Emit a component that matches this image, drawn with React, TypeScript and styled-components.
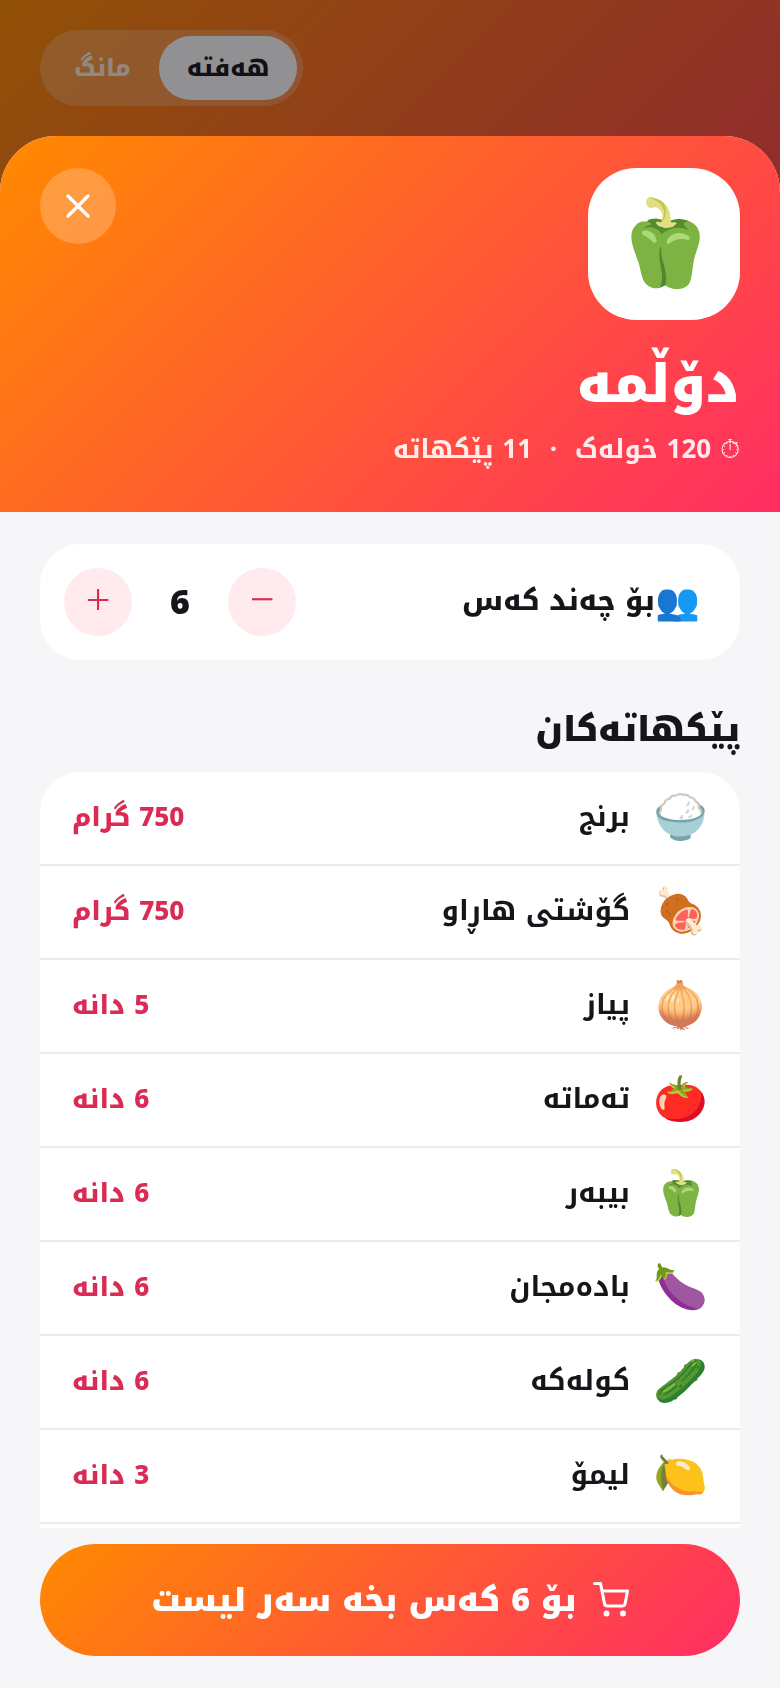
import React, { useState } from "react"
import styled, { createGlobalStyle } from "styled-components"

const ingredients = [
  { id: 1, icon: "🍚", name: "برنج", amount: "750 گرام" },
  { id: 2, icon: "🍖", name: "گۆشتی هاڕاو", amount: "750 گرام" },
  { id: 3, icon: "🧅", name: "پیاز", amount: "5 دانە" },
  { id: 4, icon: "🍅", name: "تەماتە", amount: "6 دانە" },
  { id: 5, icon: "🫑", name: "بیبەر", amount: "6 دانە" },
  { id: 6, icon: "🍆", name: "بادەمجان", amount: "6 دانە" },
  { id: 7, icon: "🥒", name: "کولەکە", amount: "6 دانە" },
  { id: 8, icon: "🍋", name: "لیمۆ", amount: "3 دانە" },
]

const App = () => {
  const [people, setPeople] = useState(6)
  return (
    <Page dir="rtl" lang="ckb">
      <GlobalStyle />
      <PageHeader>
        <Toggle>
          <ToggleButton $active>هەفتە</ToggleButton>
          <ToggleButton>مانگ</ToggleButton>
        </Toggle>
      </PageHeader>
      <Overlay>
        <Sheet role="dialog" aria-label="دۆڵمە">
          <Hero>
            <HeroTop>
              <DishTile>🫑</DishTile>
              <CloseButton aria-label="داخستن">
                <svg width="40" height="40" viewBox="0 0 24 24">
                  <path d="M6 6L18 18M18 6L6 18" />
                </svg>
              </CloseButton>
            </HeroTop>
            <h1>دۆڵمە</h1>
            <p>
              <Clock>⏱</Clock> 120 خولەک &nbsp;·&nbsp; 11 پێکهاتە
            </p>
          </Hero>
          <Body>
            <PeopleCard>
              <PeopleLabel>
                <PeopleIcon>👥</PeopleIcon>
                <PeopleText id="people-label">بۆ چەند کەس</PeopleText>
              </PeopleLabel>
              <Stepper role="group" aria-labelledby="people-label">
                <StepButton
                  aria-label="کەمتر"
                  onClick={() => setPeople(Math.max(1, people - 1))}
                >
                  −
                </StepButton>
                <output>{people}</output>
                <StepButton
                  aria-label="زیاتر"
                  onClick={() => setPeople(people + 1)}
                >
                  +
                </StepButton>
              </Stepper>
            </PeopleCard>
            <h2>پێکهاتەکان</h2>
            <List>
              {ingredients.map(({ id, icon, name, amount }) => (
                <Row key={id}>
                  <RowIcon>{icon}</RowIcon>
                  <RowName>{name}</RowName>
                  <RowAmount>{amount}</RowAmount>
                </Row>
              ))}
            </List>
          </Body>
          <Footer>
            <AddButton>
              <svg width="36" height="36" viewBox="0 0 24 24">
                <circle cx="9" cy="21" r="1" />
                <circle cx="20" cy="21" r="1" />
                <path d="M1 1h4l2.68 13.39a2 2 0 0 0 2 1.61h9.72a2 2 0 0 0 2-1.61L23 6H6" />
              </svg>
              <span>بۆ {people} کەس بخە سەر لیست</span>
            </AddButton>
          </Footer>
        </Sheet>
      </Overlay>
    </Page>
  )
}

const GlobalStyle = createGlobalStyle`
  * {
    box-sizing: border-box;
    margin: 0;
  }
  body {
    background: #f6f6f9;
    overflow: hidden;
  }
  body, button {
    font-family: "Noto Kufi Arabic", "Noto Sans", sans-serif;
  }
  button {
    border: 0;
    padding: 0;
    cursor: pointer;
  }
`
const Page = styled.div`
  min-height: 100vh;
  color: #15151a;
`
const PageHeader = styled.header`
  display: flex;
  justify-content: flex-end;
  align-items: flex-start;
  height: 592px;
  padding: 30px 40px;
  background: linear-gradient(135deg, #ff8a00, #ff2d63);
`
const Toggle = styled.div`
  display: flex;
  padding: 6px;
  border-radius: 38px;
  background: rgba(255, 255, 255, 0.22);
`
const ToggleButton = styled.button<{ $active?: boolean }>`
  height: 64px;
  padding: 0 28px;
  border-radius: 32px;
  font-size: 24px;
  font-weight: 800;
  color: ${({ $active }) => ($active ? "#15151a" : "rgba(255, 255, 255, 0.85)")};
  background: ${({ $active }) => ($active ? "#fff" : "transparent")};
`
const Overlay = styled.div`
  position: fixed;
  inset: 0;
  display: flex;
  padding-top: 136px;
  background: rgba(10, 10, 15, 0.45);
`
const Sheet = styled.section`
  flex: 1;
  display: flex;
  flex-direction: column;
  overflow: hidden;
  border-radius: 56px 56px 0 0;
  background: #f6f6f9;
`
const Hero = styled.header`
  padding: 32px 40px 38px;
  color: #fff;
  background: linear-gradient(135deg, #ff8a00, #ff2d63);
  h1 {
    margin-top: 24px;
    line-height: 82px;
    font-size: 52px;
    font-weight: 900;
  }
  p {
    line-height: 48px;
    font-size: 26px;
    font-weight: 700;
    opacity: 0.9;
  }
`
const HeroTop = styled.div`
  display: flex;
  justify-content: space-between;
  align-items: flex-start;
`
const DishTile = styled.div`
  display: grid;
  place-items: center;
  width: 152px;
  height: 152px;
  border-radius: 48px;
  font-size: 84px;
  line-height: 96px;
  background: #fff;
`
const Clock = styled.span`
  font-weight: 400;
`
const CloseButton = styled.button`
  display: grid;
  place-items: center;
  width: 76px;
  height: 76px;
  border-radius: 50%;
  background: rgba(255, 255, 255, 0.22);
  svg {
    fill: none;
    stroke: #fff;
    stroke-width: 2;
    stroke-linecap: round;
  }
`
const Body = styled.div`
  flex: 1;
  min-height: 0;
  overflow: hidden;
  padding: 32px 40px 0;
  h2 {
    margin: 42px 0 14px;
    line-height: 56px;
    font-size: 34px;
    font-weight: 900;
  }
`
const PeopleCard = styled.div`
  display: flex;
  align-items: center;
  justify-content: space-between;
  padding: 24px 40px 24px 24px;
  border-radius: 40px;
  background: #fff;
`
const PeopleLabel = styled.div`
  display: flex;
  align-items: center;
`
const PeopleIcon = styled.span`
  font-size: 36px;
  font-weight: 800;
`
const PeopleText = styled.span`
  padding-bottom: 4px;
  font-size: 28px;
  font-weight: 800;
`
const Stepper = styled.div`
  display: flex;
  align-items: center;
  output {
    width: 96px;
    text-align: center;
    font-size: 34px;
    font-weight: 900;
  }
`
const StepButton = styled.button`
  width: 68px;
  height: 68px;
  padding-bottom: 8px;
  border-radius: 50%;
  font-family: "Noto Sans", sans-serif;
  font-size: 44px;
  font-weight: 300;
  line-height: 60px;
  color: #d92b54;
  background: #ffebee;
`
const List = styled.ul`
  padding: 0;
  list-style: none;
  border-radius: 40px;
  padding-bottom: 94px;
  background: #fff;
`
const Row = styled.li`
  display: flex;
  align-items: center;
  gap: 24px;
  height: 94px;
  padding: 0 32px;
  border-bottom: 2px solid #ebebed;
`
const RowIcon = styled.span`
  width: 54px;
  text-align: center;
  font-size: 44px;
  line-height: 56px;
`
const RowName = styled.span`
  flex: 1;
  padding-bottom: 4px;
  font-size: 28px;
  font-weight: 700;
`
const RowAmount = styled.span`
  padding-bottom: 2px;
  font-size: 26px;
  font-weight: 800;
  color: #d92b54;
`
const Footer = styled.footer`
  padding: 16px 40px 32px;
`
const AddButton = styled.button`
  display: flex;
  align-items: center;
  justify-content: center;
  gap: 16px;
  width: 100%;
  height: 112px;
  border-radius: 56px;
  font-size: 32px;
  font-weight: 900;
  color: #fff;
  background: linear-gradient(135deg, #ff8a00, #ff2d63);
  svg {
    fill: none;
    stroke: #fff;
    stroke-width: 2;
    stroke-linecap: round;
    stroke-linejoin: round;
  }
`

export default App
